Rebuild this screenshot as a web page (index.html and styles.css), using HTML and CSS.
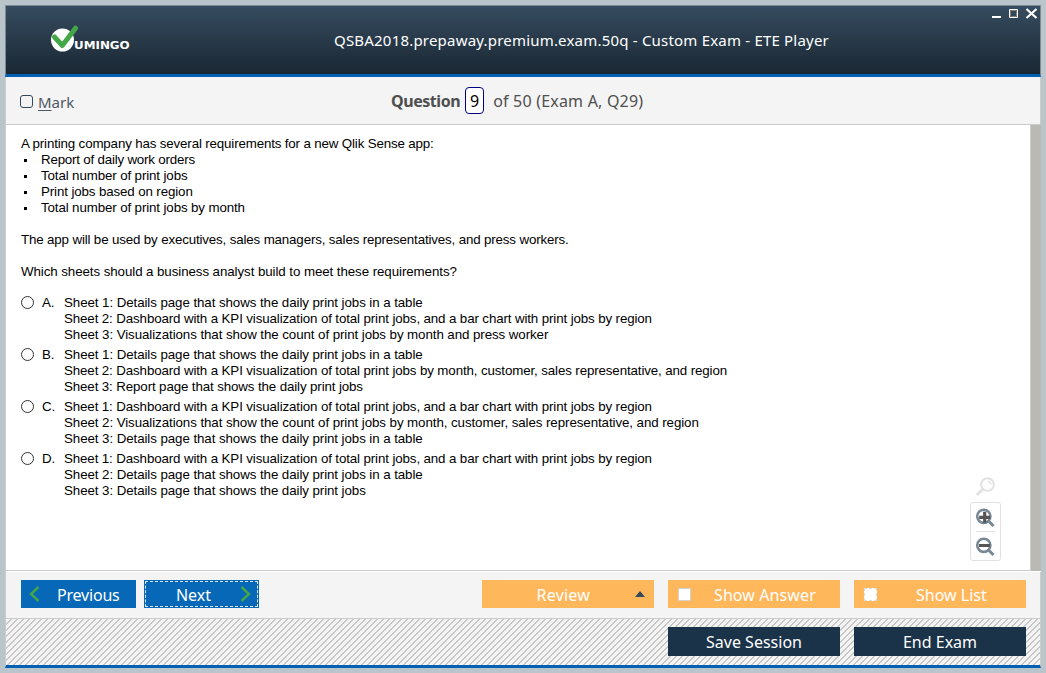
FILE: index.html
```html
<!DOCTYPE html>
<html lang="en">
<head>
<meta charset="utf-8">
<title>ETE Player</title>
<link rel="stylesheet" href="styles.css">
</head>
<body>
<div class="window">
  <header class="titlebar">
    <div class="logo">
      <svg class="logo-mark" width="28" height="28" viewBox="0 0 28 28"><circle cx="11.5" cy="15" r="11.5" fill="#fff"/><path d="M3.5 12 L11.3 20.5 L24.5 3.2" fill="none" stroke="#43a647" stroke-width="5" stroke-linecap="round" stroke-linejoin="round"/></svg>
      <span class="logo-text">UMINGO</span>
    </div>
    <h1 class="title"><span>QSBA2018.prepaway.premium.exam.50q - Custom Exam - ETE Player</span></h1>
    <svg class="controls" width="46" height="12" viewBox="0 0 46 12"><path d="M0 8h9v2H0z" fill="#fff"/><path d="M17.5 1.5h8v8h-8z" fill="none" stroke="#fff"/><path d="M18.5 2.5h6v6h-6z" fill="none" stroke="#817b75"/><path d="M34.5 1 L44.5 10 M44.5 1 L34.5 10" stroke="#fff" stroke-width="2.2"/></svg>
  </header>
  <div class="question-bar">
    <label class="mark"><i class="mark-box"></i><span><u>M</u>ark</span></label>
    <div class="counter"><b>Question</b><span class="number">9</span><span class="total">of 50 (Exam A, Q29)</span></div>
  </div>
  <main class="content">
    <div class="paper">
      <p class="tight">A printing company has several requirements for a new Qlik Sense app:</p>
      <ul class="needs">
        <li class="tighter">Report of daily work orders</li>
        <li>Total number of print jobs</li>
        <li>Print jobs based on region</li>
        <li>Total number of print jobs by month</li>
      </ul>
      <p class="gap tight">The app will be used by executives, sales managers, sales representatives, and press workers.</p>
      <p class="gap loose">Which sheets should a business analyst build to meet these requirements?</p>
      <div class="options">
        <div class="option"><i class="radio"></i><span class="letter">A.</span><div><p class="loose">Sheet 1: Details page that shows the daily print jobs in a table</p><p>Sheet 2: Dashboard with a KPI visualization of total print jobs, and a bar chart with print jobs by region</p><p class="loose">Sheet 3: Visualizations that show the count of print jobs by month and press worker</p></div></div>
        <div class="option"><i class="radio"></i><span class="letter">B.</span><div><p class="loose">Sheet 1: Details page that shows the daily print jobs in a table</p><p>Sheet 2: Dashboard with a KPI visualization of total print jobs by month, customer, sales representative, and region</p><p>Sheet 3: Report page that shows the daily print jobs</p></div></div>
        <div class="option"><i class="radio"></i><span class="letter">C.</span><div><p>Sheet 1: Dashboard with a KPI visualization of total print jobs, and a bar chart with print jobs by region</p><p class="loose">Sheet 2: Visualizations that show the count of print jobs by month, customer, sales representative, and region</p><p class="loose">Sheet 3: Details page that shows the daily print jobs in a table</p></div></div>
        <div class="option"><i class="radio"></i><span class="letter">D.</span><div><p>Sheet 1: Dashboard with a KPI visualization of total print jobs, and a bar chart with print jobs by region</p><p class="loose">Sheet 2: Details page that shows the daily print jobs in a table</p><p class="loose">Sheet 3: Details page that shows the daily print jobs</p></div></div>
      </div>
      <div class="zoom-tools">
        <svg width="20" height="20" viewBox="0 0 20 20" fill="none" stroke="#e1e1e1"><circle cx="12.5" cy="7.5" r="6.3" stroke-width="2"/><path d="M13 4.3 Q15.8 4.8 16 7.5" stroke-width="1.3"/><path d="M8 12 L1.8 18" stroke-width="3"/></svg>
        <div class="zoom-box">
          <svg width="20" height="20" viewBox="0 0 20 20" fill="none"><circle cx="8.8" cy="8.3" r="6.6" stroke="#788894" stroke-width="2.6"/><path d="M13.5 13 L18.5 18" stroke="#788894" stroke-width="3"/><path d="M9.7 3.8v11M4.2 9.3h11" stroke="#555" stroke-width="3.2"/></svg>
          <svg width="20" height="20" viewBox="0 0 20 20" fill="none"><circle cx="8.8" cy="8.3" r="6.6" stroke="#788894" stroke-width="2.6"/><path d="M13.5 13 L18.5 18" stroke="#788894" stroke-width="3"/><path d="M4 8.5h11" stroke="#555" stroke-width="3"/></svg>
        </div>
      </div>
    </div>
    <div class="scrollbar"></div>
  </main>
  <div class="nav-bar">
    <button class="btn blue prev"><svg width="11" height="16" viewBox="0 0 11 16"><path d="M9.5 1 L2 8 L9.5 15" fill="none" stroke="#43a647" stroke-width="2.4"/></svg><span>Previous</span></button>
    <button class="btn blue next"><span>Next</span><svg width="11" height="16" viewBox="0 0 11 16"><path d="M1.5 1 L9 8 L1.5 15" fill="none" stroke="#43a647" stroke-width="2.4"/></svg></button>
    <button class="btn orange review"><span>Review</span><svg width="10" height="6" viewBox="0 0 10 6"><path d="M5 0 L10 6 H0z" fill="#34495a"/></svg></button>
    <button class="btn orange"><i class="check"></i><span class="answer">Show Answer</span></button>
    <button class="btn orange"><i class="check dashed"></i><span class="list">Show List</span></button>
  </div>
  <footer class="session-bar">
    <button class="btn navy">Save Session</button>
    <button class="btn navy">End Exam</button>
  </footer>
</div>
</body>
</html>
```
FILE: styles.css
```css
* { box-sizing: border-box; }
body { margin: 0; height: 673px; padding: 5px; background: #b9c5cb; overflow: hidden; font-family: "Noto Sans", sans-serif; }
p, ul, h1 { margin: 0; padding: 0; }
svg { display: block; flex: none; }
.window { width: 1036px; height: 663px; display: flex; flex-direction: column; }
.titlebar { position: relative; height: 72px; flex: none; display: flex; border: 1px solid #7d8a90; border-bottom: 3px solid #0061b4; background: linear-gradient(#364c60, #1a2733); color: #fff; }
.logo { display: flex; margin: 19px 0 0 45px; width: 283px; }
.logo-text { margin: 13px 0 0 -5px; font: bold 11px/14px "DejaVu Sans", sans-serif; transform: scale(1.08, .9); transform-origin: left center; }
.title { font-size: 15px; font-weight: 400; line-height: 20px; margin-top: 24px; white-space: nowrap; letter-spacing: .2px; }
.controls { position: absolute; left: 986px; top: 2px; }
.question-bar { height: 48px; flex: none; display: flex; align-items: center; background: #f4f4f4; border: solid #ccc; border-width: 0 1px 1px; color: #4f4f4f; font-size: 16px; line-height: 22px; }
.mark { display: flex; align-items: center; width: 371px; padding: 3px 0 0 14px; color: #4c5863; font-size: 15px; }
.mark-box { width: 13px; height: 13px; border: 1px solid #34495a; border-radius: 3px; margin: -1px 5px 0 0; }
.mark u { text-underline-offset: 2px; }
.counter { display: flex; align-items: center; margin-left: 14px; white-space: nowrap; }
.counter b { letter-spacing: -.45px; }
.total { letter-spacing: .2px; }
.number { width: 19px; height: 27px; border: 1px solid #000080; border-radius: 4px; background: #fff; color: #000; text-align: center; line-height: 26px; margin: 0 9px 0 5px; }
.content { height: 447px; flex: none; display: flex; background: #fff; border-left: 1px solid #ccc; }
.paper { position: relative; width: 1025px; height: 446px; border-right: 1px solid #ccc; border-bottom: 1px solid #ccc; padding: 11px 0 0 15px; font: 13.33px/16px "Liberation Sans", Arial, sans-serif; color: #000; white-space: nowrap; letter-spacing: -.122px; }
.tight { letter-spacing: -.15px; }
.tighter { letter-spacing: -.2px; }
.loose { letter-spacing: -.08px; }
.scrollbar { width: 10px; height: 446px; background: #bab9b4; }
.needs { list-style: none; }
.needs li { display: flex; align-items: center; gap: 13px; }
.needs li::before { content: ""; width: 3px; height: 3px; margin: 0 1px 0 3px; background: #000; }
.gap { margin-top: 16px; }
.options { display: flex; flex-direction: column; gap: 4px; margin-top: 15px; }
.option { display: flex; }
.radio { width: 13px; height: 13px; margin: 1px 8px 0 0; border: 1px solid #333; border-radius: 50%; }
.letter { width: 22px; }
.zoom-tools { position: absolute; left: 964px; top: 352px; display: flex; flex-direction: column; align-items: center; gap: 5px; }
.zoom-tools svg { margin-left: -2px; }
.zoom-box { width: 31px; height: 59px; border: 1px solid #e1e1e1; border-radius: 3px; display: flex; flex-direction: column; align-items: center; padding-top: 5px; gap: 9px; background: linear-gradient(#e1e1e1, #e1e1e1) center 28px / 19px 1px no-repeat; }
.nav-bar { height: 47px; flex: none; background: #f4f4f4; border: solid #ccc; border-width: 0 1px 1px; padding: 8px 0 0 15px; display: flex; }
.btn { position: relative; height: 28px; flex: none; display: flex; align-items: center; justify-content: center; border: 0; padding: 0; font: 16px/28px "Noto Sans", sans-serif; color: #fff; white-space: nowrap; }
.btn > span { padding-top: 2px; }
.blue { width: 115px; background: #0768b7; margin-right: 8px; }
.prev { justify-content: flex-start; padding-left: 8px; gap: 17px; letter-spacing: -.2px; }
.next { justify-content: flex-end; padding-right: 8px; gap: 29px; outline: 1px dashed #d9e6f0; outline-offset: -2px; margin-right: 223px; }
.orange { width: 172px; background: #ffb75c; margin-right: 14px; }
.review { justify-content: flex-end; padding-right: 9px; gap: 45px; letter-spacing: .2px; }
.check { width: 13px; height: 13px; background: #fff; border: 1px solid #d6d2cc; margin: 1px 0 0 10px; }
.orange:has(.check) { justify-content: flex-start; }
.dashed { border: 1px dashed #ddd; }
.answer { margin-left: 23px; letter-spacing: .1px; }
.list { margin-left: 39px; }
.session-bar { height: 49px; flex: none; display: flex; gap: 14px; justify-content: flex-end; padding: 8px 14px 0 0; border: solid #ccc; border-width: 0 1px; border-bottom: 3px solid #0061b4; background: repeating-linear-gradient(135deg, #f4f4f4 0 3.1px, #c8c8c8 3.1px 4.243px); }
.navy { width: 172px; height: 29px; background: #1a3349; line-height: 30px; padding-top: 1px; }
```
